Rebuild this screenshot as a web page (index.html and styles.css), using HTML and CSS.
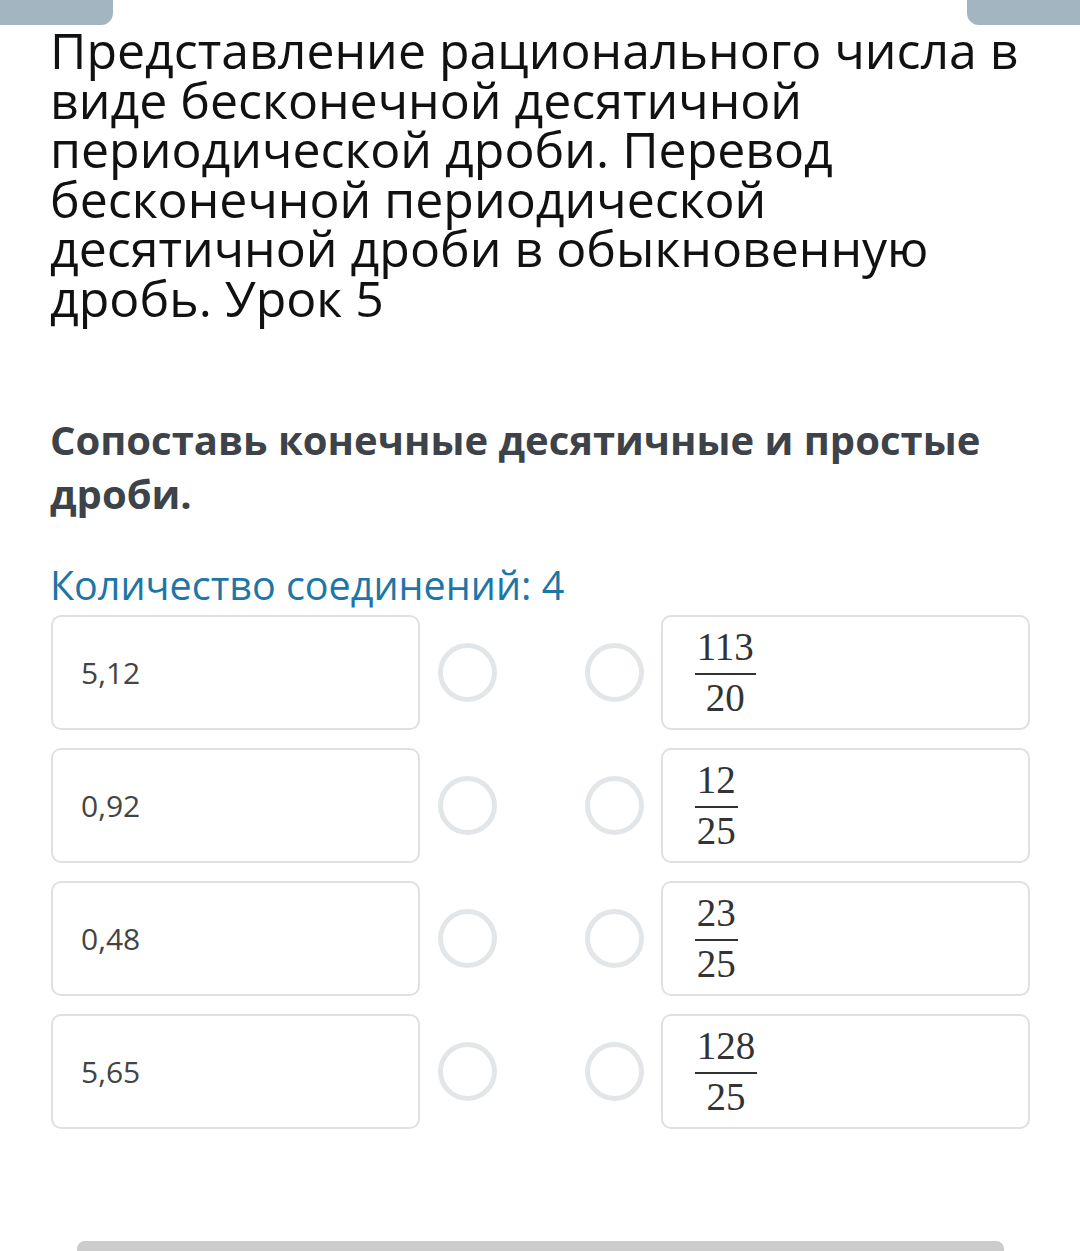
FILE: index.html
```html
<!doctype html>
<html>
<head>
    <title>Урок 5</title>

    <link rel="stylesheet" href="styles.css">
</head>
<body>
    <div class="tabs">
      <div class="tab tab-left"></div>
      <div class="tab tab-right"></div>
    </div>

    <div class="content">
      <h1 class="title">Представление рационального числа в<br>виде бесконечной десятичной<br>периодической дроби. Перевод<br>бесконечной периодической<br>десятичной дроби в обыкновенную<br>дробь. Урок 5</h1>

      <p class="question">Сопоставь конечные десятичные и простые дроби.</p>

      <p class="count">Количество соединений: 4</p>

      <div class="pairs">
        <div class="row">
          <div class="card">5,12</div>
          <div class="dots"><span class="dot"></span><span class="dot"></span></div>
          <div class="card">
            <span class="frac"><span class="num">113</span><span class="den">20</span></span>
          </div>
        </div>

        <div class="row">
          <div class="card">0,92</div>
          <div class="dots"><span class="dot"></span><span class="dot"></span></div>
          <div class="card">
            <span class="frac"><span class="num">12</span><span class="den">25</span></span>
          </div>
        </div>

        <div class="row">
          <div class="card">0,48</div>
          <div class="dots"><span class="dot"></span><span class="dot"></span></div>
          <div class="card">
            <span class="frac"><span class="num">23</span><span class="den">25</span></span>
          </div>
        </div>

        <div class="row">
          <div class="card">5,65</div>
          <div class="dots"><span class="dot"></span><span class="dot"></span></div>
          <div class="card">
            <span class="frac"><span class="num">128</span><span class="den">25</span></span>
          </div>
        </div>
      </div>

      <div class="bottom-bar"></div>
    </div>
</body>
</html>
```

FILE: styles.css
```css
* {
  margin: 0;
  padding: 0;
  box-sizing: border-box;
}
body {
  background-color: #fff;
  font-family: "Open Sans", "Noto Sans", sans-serif;
  overflow: hidden;
}
.tabs {
  display: flex;
  justify-content: space-between;
  height: 25px;
}
.tab {
  width: 113px;
  height: 25px;
  background-color: #a3b5c1;
}
.tab-left {
  border-radius: 0 0 12px 0;
}
.tab-right {
  border-radius: 0 0 0 12px;
}
.content {
  padding: 1px 50px 0;
}
.title {
  font-size: 50px;
  font-weight: 400;
  line-height: 49.6px;
  color: #111;
}
.question {
  margin-top: 89px;
  font-size: 40px;
  font-weight: 700;
  line-height: 54px;
  color: #3d4349;
}
.count {
  margin-top: 44px;
  font-size: 39.5px;
  line-height: 40px;
  color: #1d76a6;
}
.pairs {
  margin-top: 10px;
  display: flex;
  flex-direction: column;
  gap: 18px;
  padding-left: 1px;
}
.row {
  display: flex;
  align-items: center;
}
.card {
  width: 370px;
  height: 115px;
  border: 2px solid #e0e0e0;
  border-radius: 10px;
  padding: 0 28px;
  display: flex;
  align-items: center;
  font-size: 30px;
  color: #444;
}
.dots {
  width: 241px;
  display: flex;
  justify-content: center;
  gap: 88px;
}
.dot {
  width: 59px;
  height: 59px;
  border: 5px solid #e3e6e8;
  border-radius: 50%;
}
.frac {
  display: inline-flex;
  flex-direction: column;
  align-items: stretch;
  padding: 0 4px;
  font-family: "Liberation Serif", "Times New Roman", serif;
  font-size: 39px;
  color: #333;
  text-align: center;
}
.num {
  line-height: 40px;
  padding: 0 2px 6px;
  border-bottom: 2px solid #333;
}
.den {
  line-height: 40px;
  padding-top: 3px;
}
.bottom-bar {
  margin: 112px 0 0 27px;
  width: 927px;
  height: 20px;
  background-color: #ccc;
  border-radius: 8px 8px 0 0;
}
```
